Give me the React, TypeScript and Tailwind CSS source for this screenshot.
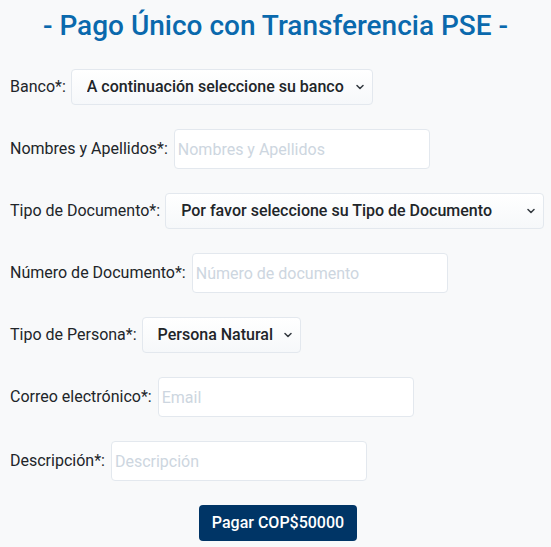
import React from 'react'

const FONT = { fontFamily: 'Roboto, "Noto Sans", sans-serif' }

function Chevron() {
  return (
    <svg className="pointer-events-none absolute right-[9px] top-1/2 -translate-y-1/2" width="8" height="6" viewBox="0 0 8 6" fill="none">
      <path d="M1 1.5L4 4.5L7 1.5" stroke="#343a40" strokeWidth="1.5" strokeLinecap="round" strokeLinejoin="round" />
    </svg>
  )
}

function SelectField({ label, value, width, mb = 'mb-[22px]' }: { label: string; value: string; width: string; mb?: string }) {
  return (
    <div className={`flex h-[40px] items-center ${mb}`}>
      <label className="mr-[5px] shrink-0 whitespace-nowrap text-[16px] text-[#212529]">{label}</label>
      <div className={`relative shrink-0 ${width}`}>
        <select
          defaultValue={value}
          className="h-[36px] w-full appearance-none rounded-[4px] border border-[#e3e8ee] bg-gradient-to-b from-white to-[#f6f8fa] pl-[15px] pr-[24px] text-[16px] font-medium text-[#212529] outline-none"
          style={FONT}
        >
          <option>{value}</option>
        </select>
        <Chevron />
      </div>
    </div>
  )
}

function InputField({ label, placeholder, mb = 'mb-[22px]' }: { label: string; placeholder: string; mb?: string }) {
  return (
    <div className={`flex h-[40px] items-center ${mb}`}>
      <label className="mr-[6px] shrink-0 whitespace-nowrap text-[16px] text-[#212529]">{label}</label>
      <input
        placeholder={placeholder}
        className="h-[40px] w-[256px] shrink-0 rounded-[4px] border border-[#e3e8ee] bg-white px-[3px] text-[16px] text-[#212529] outline-none placeholder:text-[#cdd6e0]"
        style={FONT}
      />
    </div>
  )
}

export default function App() {
  return (
    <div className="min-h-[547px] overflow-hidden bg-[#f8f9fa] px-[10px]" style={FONT}>
      <h1 className="pt-[9px] text-center text-[28px] font-medium leading-[34px] text-[#0a69ad]">
        - Pago Único con Transferencia PSE -
      </h1>

      <form className="mt-[24px]" onSubmit={e => e.preventDefault()}>
        <SelectField label="Banco*:" value="A continuación seleccione su banco" width="w-[302px]" />
        <InputField label="Nombres y Apellidos*:" placeholder="Nombres y Apellidos" />
        <SelectField label="Tipo de Documento*:" value="Por favor seleccione su Tipo de Documento" width="w-[379px]" />
        <InputField label="Número de Documento*:" placeholder="Número de documento" />
        <SelectField label="Tipo de Persona*:" value="Persona Natural" width="w-[159px]" />
        <InputField label="Correo electrónico*:" placeholder="Email" mb="mb-[24px]" />
        <InputField label="Descripción*:" placeholder="Descripción" />

        <div className="flex h-[40px] items-center justify-center">
          <button
            type="submit"
            className="ml-[5px] h-[36px] rounded-[4px] bg-[#003566] px-[13px] text-[16px] font-medium text-white"
          >
            Pagar COP$50000
          </button>
        </div>
      </form>
    </div>
  )
}
